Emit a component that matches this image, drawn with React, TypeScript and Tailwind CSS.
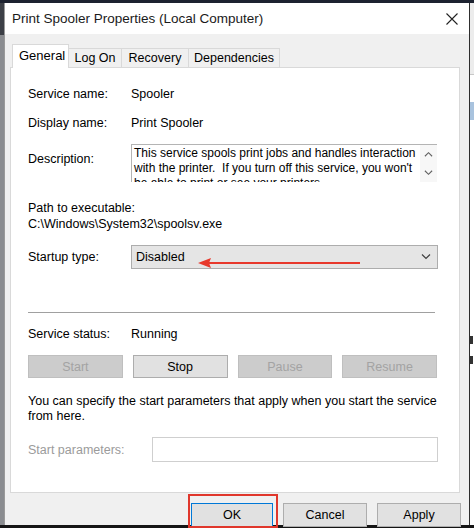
import React from "react";

function Chevron({ dir, className }: { dir: "up" | "down"; className?: string }) {
  return (
    <svg viewBox="0 0 10 6" className={className} fill="none" stroke="currentColor" strokeWidth="1.2">
      {dir === "up" ? <path d="M1 5.5 L5 1.5 L9 5.5" /> : <path d="M1 0.5 L5 4.5 L9 0.5" />}
    </svg>
  );
}

function ActionButton({ label, enabled }: { label: string; enabled?: boolean }) {
  return (
    <div
      className={
        enabled
          ? "h-[23px] flex items-center justify-center border border-[#adadad] bg-[#e1e1e1] text-black"
          : "h-[23px] flex items-center justify-center border border-[#bfbfbf] bg-[#cccccc] text-[#a3a3a3]"
      }
    >
      {label}
    </div>
  );
}

export default function App() {
  return (
    <div className="w-[474px] h-[528px] overflow-hidden flex flex-col bg-[#1d2230] font-['Segoe_UI','Liberation_Sans',Arial,sans-serif] text-[12.5px] leading-4 text-black">
      {/* top strip of the desktop behind */}
      <div className="h-[3px] shrink-0" />

      <div className="flex flex-1 min-h-0">
        {/* window behind, left */}
        <div className="w-[4px] shrink-0 flex flex-col">
          <div className="h-[32px] bg-[#3c3f46]" />
          <div className="flex-1 bg-[#8a8c90]" />
        </div>

        {/* dialog */}
        <div className="relative w-[465px] shrink-0 flex flex-col bg-[#f0f0f0] border-l border-[#9a9a9a]">
          {/* title bar */}
          <div className="h-[31px] shrink-0 bg-white flex items-center justify-between pl-[7px] pr-[11px]">
            <span className="text-[13.5px] text-[#1a1a1a]">Print Spooler Properties (Local Computer)</span>
            <svg viewBox="0 0 12 12" className="w-[12px] h-[12px] text-[#222]" stroke="currentColor" strokeWidth="1.1">
              <path d="M0.5 0.5 L11.5 11.5 M11.5 0.5 L0.5 11.5" />
            </svg>
          </div>

          {/* tabs */}
          <div className="flex items-end pl-[7px] pt-[9px] h-[33px] shrink-0">
            <div className="relative z-10 h-[24px] w-[57px] -mb-px bg-white border border-b-0 border-[#d9d9d9] flex items-center pl-[6px] pb-[2px] text-[13px]">
              General
            </div>
            <div className="h-[19px] w-[53px] border border-l-0 border-b-0 border-[#d9d9d9] bg-[#f0f0f0] flex items-center justify-center">
              Log On
            </div>
            <div className="h-[19px] w-[67px] border border-l-0 border-b-0 border-[#d9d9d9] bg-[#f0f0f0] flex items-center justify-center">
              Recovery
            </div>
            <div className="h-[19px] w-[91px] border border-l-0 border-b-0 border-[#d9d9d9] bg-[#f0f0f0] flex items-center justify-center">
              Dependencies
            </div>
          </div>

          {/* tab panel */}
          <div className="ml-[5px] w-[450px] h-[426px] shrink-0 bg-white border border-[#d9d9d9] pl-[17px] pr-[21px] pt-[18px]">
            <div className="flex">
              <span className="w-[103px]">Service name:</span>
              <span>Spooler</span>
            </div>
            <div className="flex mt-[13px]">
              <span className="w-[103px]">Display name:</span>
              <span>Print Spooler</span>
            </div>
            <div className="flex mt-[13px]">
              <span className="w-[103px] mt-[7px]">Description:</span>
              <div className="relative w-[306px] h-[38px] overflow-hidden border-t border-l border-[#b4b4b4] pl-[2px] pr-[17px] text-[12px] leading-[15px] pt-[1px]">
                This service spools print jobs and handles interaction with the printer.&nbsp; If you turn off this service, you won't be able to print or see your printers.
                <div className="absolute right-0 top-0 bottom-0 w-[17px] bg-[#f7f7f7] flex flex-col items-center pt-[6px] gap-[13px] text-[#606060]">
                  <Chevron dir="up" className="w-[9px] h-[6px]" />
                  <Chevron dir="down" className="w-[9px] h-[6px]" />
                </div>
              </div>
            </div>

            <div className="mt-[18px]">Path to executable:</div>
            <div>C:\Windows\System32\spoolsv.exe</div>

            <div className="flex items-center mt-[13px]">
              <span className="w-[103px]">Startup type:</span>
              <div className="relative w-[307px] h-[24px] bg-[#e5e5e5] border border-[#adadad] flex items-center justify-between pl-[4px] pr-[6px]">
                <span>Disabled</span>
                <Chevron dir="down" className="w-[10px] h-[6px] text-[#404040]" />
                {/* red annotation arrow */}
                <svg className="absolute left-[66px] top-[11px] w-[162px] h-[12px]" viewBox="0 0 162 12">
                  <path d="M10 6 L162 6" stroke="#e8392c" strokeWidth="2" />
                  <path d="M0 6 L13 1 L11 6 L13 11 Z" fill="#e8392c" />
                </svg>
              </div>
            </div>

            <div className="mt-[43px] h-px w-[407px] bg-[#a0a0a0]" />

            <div className="flex mt-[13px]">
              <span className="w-[103px]">Service status:</span>
              <span>Running</span>
            </div>

            <div className="grid grid-cols-4 gap-[10px] mt-[13px] w-[409px]">
              <ActionButton label="Start" />
              <ActionButton label="Stop" enabled />
              <ActionButton label="Pause" />
              <ActionButton label="Resume" />
            </div>

            <p className="mt-[16px] leading-[15px] w-[420px]">
              You can specify the start parameters that apply when you start the service from here.
            </p>

            <div className="flex items-center mt-[13px]">
              <span className="w-[124px] text-[#9b9b9b]">Start parameters:</span>
              <div className="w-[286px] h-[25px] bg-white border border-[#cfcfcf]" />
            </div>
          </div>

          {/* bottom buttons */}
          <div className="flex justify-end gap-[10px] pr-[8px] mt-[10px]">
            <div className="relative w-[82px] h-[24px] bg-[#e1e1e1] border border-[#0078d7] flex items-center justify-center">
              OK
              <div className="absolute -left-[4px] -right-[6px] -top-[10px] -bottom-[2px] border-2 border-[#e0372c]" />
            </div>
            <div className="w-[84px] h-[24px] bg-[#e1e1e1] border border-[#adadad] flex items-center justify-center">Cancel</div>
            <div className="w-[84px] h-[24px] bg-[#e1e1e1] border border-[#adadad] flex items-center justify-center">Apply</div>
          </div>
        </div>

        {/* window behind, right */}
        <div className="flex-1 flex border-l border-[#2e2e2e]">
          <div className="flex-1 flex flex-col bg-white">
            <div className="h-[72px] bg-[#ececec] border-b border-[#c8c8c8]" />
            <div className="h-[27px]" />
            <div className="h-[18px] bg-[#a9c3de]" />
            <div className="h-[216px]" />
            <div className="h-[8px] w-[3px] bg-[#333]" />
            <div className="h-[12px]" />
            <div className="h-[8px] w-[3px] bg-[#333]" />
          </div>
        </div>
      </div>

      {/* taskbar */}
      <div className="h-[3px] shrink-0 bg-[#151515]" />
    </div>
  );
}
